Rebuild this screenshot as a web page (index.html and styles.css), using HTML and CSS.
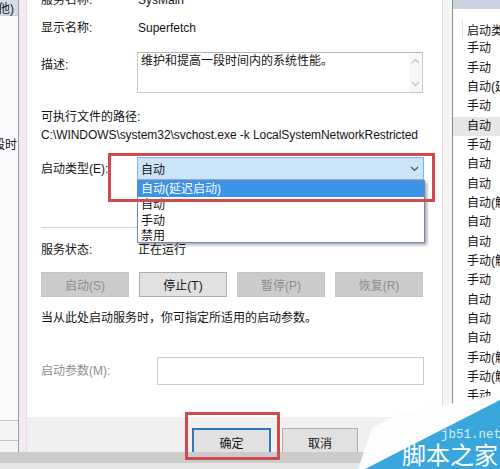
FILE: index.html
```html
<!DOCTYPE html>
<html lang="zh-CN">
<head>
<meta charset="utf-8">
<title>Superfetch 属性</title>
<link rel="stylesheet" href="styles.css">
</head>
<body>
<div class="screen">
  <div class="main">
    <div class="leftpane">
      <div class="lhead"><span>(其他)</span></div>
      <div class="lrow"><span>维护和提高一段时</span></div>
      <div class="lspacer"></div>
      <div class="lfoot"><div class="lfoot-line"></div></div>
    </div>
    <div class="frame-left"></div>
    <div class="dialog">
      <div class="content">
        <div class="row r1"><div class="lbl">服务名称:</div><div class="val">SysMain</div></div>
        <div class="row r2"><div class="lbl">显示名称:</div><div class="val">Superfetch</div></div>
        <div class="row r3">
          <div class="lbl lbl-top">描述:</div>
          <div class="textbox">
            <div class="textbox-text">维护和提高一段时间内的系统性能。</div>
            <div class="scroll">
              <svg width="9" height="6" viewBox="0 0 9 6"><polyline points="1,5 4.5,1.5 8,5" fill="none" stroke="#c2c2c2" stroke-width="1.2"/></svg>
              <svg width="9" height="6" viewBox="0 0 9 6"><polyline points="1,1 4.5,4.5 8,1" fill="none" stroke="#c2c2c2" stroke-width="1.2"/></svg>
            </div>
          </div>
        </div>
        <div class="row r4"><div class="lbl wide">可执行文件的路径:</div></div>
        <div class="row r5"><div class="path">C:\WINDOWS\system32\svchost.exe -k LocalSystemNetworkRestricted</div></div>
        <div class="row r6">
          <div class="lbl">启动类型(E):</div>
          <div class="combo-wrap">
            <div class="combo">
              <span>自动</span>
              <svg class="chev" width="9" height="6" viewBox="0 0 9 6"><polyline points="1,1 4.5,4.5 8,1" fill="none" stroke="#4a4a4a" stroke-width="1.1"/></svg>
            </div>
            <div class="popup">
              <div class="opt sel">自动(延迟启动)</div>
              <div class="opt">自动</div>
              <div class="opt">手动</div>
              <div class="opt">禁用</div>
            </div>
            <div class="redbox redbox-combo"></div>
          </div>
        </div>
        <div class="sep"></div>
        <div class="row r7"><div class="lbl">服务状态:</div><div class="val">正在运行</div></div>
        <div class="btnrow">
          <div class="btn dis">启动(S)</div>
          <div class="btn">停止(T)</div>
          <div class="btn dis">暂停(P)</div>
          <div class="btn dis">恢复(R)</div>
        </div>
        <div class="row note">当从此处启动服务时，你可指定所适用的启动参数。</div>
        <div class="row r8">
          <div class="lbl lbl-dis">启动参数(M):</div>
          <div class="input"></div>
        </div>
      </div>
      <div class="footer">
        <div class="fbtn ok">确定</div>
        <div class="fbtn">取消</div>
      </div>
    </div>
    <div class="frame-right"></div>
    <div class="svclist">
      <div class="sband"></div>
      <div class="shead"><div class="sdiv"></div><span>启动类型</span></div>
      <div class="srow">手动</div>
      <div class="srow">手动</div>
      <div class="srow">自动(延迟启动)</div>
      <div class="srow">手动</div>
      <div class="srow hl">自动</div>
      <div class="srow">手动</div>
      <div class="srow">自动</div>
      <div class="srow">自动</div>
      <div class="srow">自动(触发器启动)</div>
      <div class="srow">自动</div>
      <div class="srow">自动</div>
      <div class="srow">手动(触发器启动)</div>
      <div class="srow">手动</div>
      <div class="srow">自动</div>
      <div class="srow">自动</div>
      <div class="srow">自动</div>
      <div class="srow">手动(触发器启动)</div>
      <div class="srow">手动(触发器启动)</div>
      <div class="srow">手动</div>
    </div>
  </div>
  <div class="taskbar"></div>

  <div class="redbox redbox-ok"></div>

  <div class="watermark">
    <svg width="145" height="79" viewBox="0 0 145 79">
      <polygon points="3,79 17,38 43,24 145,4 145,79" fill="#fdfdfd"/>
      <polygon points="10,79 145,10 145,79" fill="#3aa7dc"/>
    </svg>
    <span class="wm-url">jb51.net</span>
    <span class="wm-name">脚本之家</span>
  </div>
</div>
</body>
</html>
```

FILE: styles.css
```css
* { box-sizing: border-box; }
html, body { margin: 0; padding: 0; }
body {
  width: 500px;
  height: 469px;
  overflow: hidden;
  font-family: "Liberation Sans", "Noto Sans CJK SC", sans-serif;
  font-size: 12px;
  color: #141414;
  background: #e8e8e8;
}
.screen { position: relative; width: 500px; height: 469px; overflow: hidden; }
.main { display: flex; height: 452px; }

/* left background window */
.leftpane {
  width: 19px; flex: none;
  background: #fafafc;
  border-right: 1px solid #9c9c9c;
  display: flex; flex-direction: column;
  overflow: hidden;
}
.lhead {
  height: 16px; flex: none;
  background: #d6dde8;
  border-bottom: 1px solid #c6cdd8;
  display: flex; justify-content: flex-end; align-items: center;
  padding-right: 4px; white-space: nowrap;
}
.lrow {
  height: 16px; margin-top: 119px; flex: none;
  display: flex; justify-content: flex-end; align-items: center;
  padding-right: 1px; white-space: nowrap;
}
.lspacer { flex: 1; }
.lfoot { height: 32px; flex: none; border-top: 1px solid #c4c4c4; background: #f4f4f4; }
.lfoot-line { margin-top: 19px; border-top: 1px solid #c4c4c4; }

.frame-left { width: 8px; flex: none; background: #f3eaf3; border-right: 1px solid #e3dde3; }
.frame-right { width: 10px; flex: none; background: #f5f5f5; border-left: 1px solid #dcdcdc; }

/* dialog */
.dialog { width: 415px; flex: none; display: flex; flex-direction: column; }
.content {
  height: 417px; flex: none;
  background: #fff;
  padding-left: 14px;
  overflow: hidden;
}
.row { display: flex; align-items: center; height: 16px; line-height: 16px; white-space: nowrap; }
.lbl { width: 96px; flex: none; }
.lbl.wide { width: auto; }
.val { padding-left: 1px; }
.r1 { margin-top: -8px; }
.r2 { margin-top: 12px; }
.r3 { margin-top: 16px; height: 41px; align-items: flex-start; }
.lbl-top { padding-top: 5px; }
.textbox {
  width: 286px; height: 41px;
  border: 1px solid #c9c9c9;
  border-top-color: #b5b5b5;
  display: flex;
}
.textbox-text { flex: 1; padding-left: 3px; line-height: 16px; }
.scroll {
  width: 13px; flex: none;
  background: #f7f7f7;
  display: flex; flex-direction: column; justify-content: space-between; align-items: center;
  padding: 5px 0 5px;
}
.r4 { margin-top: 16px; }
.r5 { margin-top: 2px; }
.path { letter-spacing: -0.06px; }
.r6 { margin-top: 14px; height: 23px; }
.combo-wrap { position: relative; width: 287px; height: 23px; }
.combo {
  height: 23px;
  background: #cce4f7;
  border: 1px solid #7db3e8;
  display: flex; align-items: center; justify-content: space-between;
  padding: 2px 4px 0 3px;
}
.chev { margin-top: -1px; }
.popup {
  position: absolute; left: 0; top: 100%;
  width: 288px; height: 63px;
  background: #fff;
  border: 1px solid #6f8aac;
  box-shadow: 2px 2px 3px rgba(0,0,0,0.35);
  z-index: 2;
}
.opt { height: 16px; line-height: 16px; padding-left: 3px; }
.opt.sel { background: #3993e8; color: #fff; }
.opt:last-child { height: 14px; line-height: 14px; }
.redbox { position: absolute; border: 3px solid #d0494f; z-index: 3; }
.redbox-combo { left: -29px; top: -4px; right: -11px; bottom: -22px; }
.redbox-ok { left: 185px; top: 412px; width: 95px; height: 48px; }

.sep { margin-top: 47px; width: 382px; height: 1px; background: #d4d4d4; }
.r7 { margin-top: 14px; }
.btnrow { margin-top: 14px; display: flex; gap: 10px; }
.btn {
  width: 88px; height: 25px;
  display: flex; align-items: center; justify-content: center;
  background: #e1e1e1; border: 1px solid #adadad;
}
.btn.dis { background: #cccccc; border-color: #c4c4c4; color: #8d8d8d; }
.note { margin-top: 13px; }
.r8 { margin-top: 31px; height: 28px; }
.lbl-dis { width: 116px; color: #8d8d8d; }
.input { width: 267px; height: 28px; border: 1px solid #cdcdcd; background: #fff; }

.footer {
  height: 35px; flex: none;
  background: #f0f0f0;
  padding: 11px 0 0 165px;
  display: flex; gap: 11px;
  overflow: hidden;
}
.fbtn {
  width: 76px; height: 30px; flex: none;
  background: #e1e1e1; border: 1px solid #adadad;
  display: flex; justify-content: center;
  padding-top: 5px;
}
.fbtn.ok { width: 79px; border: 2px solid #2f77b8; padding-top: 4px; }

/* right background list */
.svclist {
  flex: 1;
  background: #fff;
  border-left: 1px solid #8e8e8e;
  overflow: hidden;
  white-space: nowrap;
}
.sband { height: 9px; background: #c9d2de; }
.shead { margin-top: 11px; height: 19.33px; display: flex; align-items: center; }
.sdiv { width: 10px; height: 19px; border-right: 1px solid #e0e0e0; flex: none; }
.shead span { padding-left: 4px; }
.srow { height: 19.33px; line-height: 19.33px; padding-left: 14px; }
.srow.hl { background: #e6e6e6; }

.taskbar { height: 17px; background: linear-gradient(#cbcbcb 0 11px, #e6e6e6 11px); }

/* watermark */
.watermark { position: absolute; left: 355px; top: 390px; width: 145px; height: 79px; z-index: 4; }
.watermark svg { display: block; }
.wm-url {
  position: absolute; left: 86px; top: 39px;
  font-family: "Liberation Mono", "DejaVu Sans Mono", monospace;
  font-size: 12.5px; line-height: 12px;
  color: #d5eefa;
}
.wm-name {
  position: absolute; left: 47px; top: 52px;
  font-family: "Noto Sans CJK SC", sans-serif;
  font-size: 24px; line-height: 24px;
  color: #fff;
}
```
